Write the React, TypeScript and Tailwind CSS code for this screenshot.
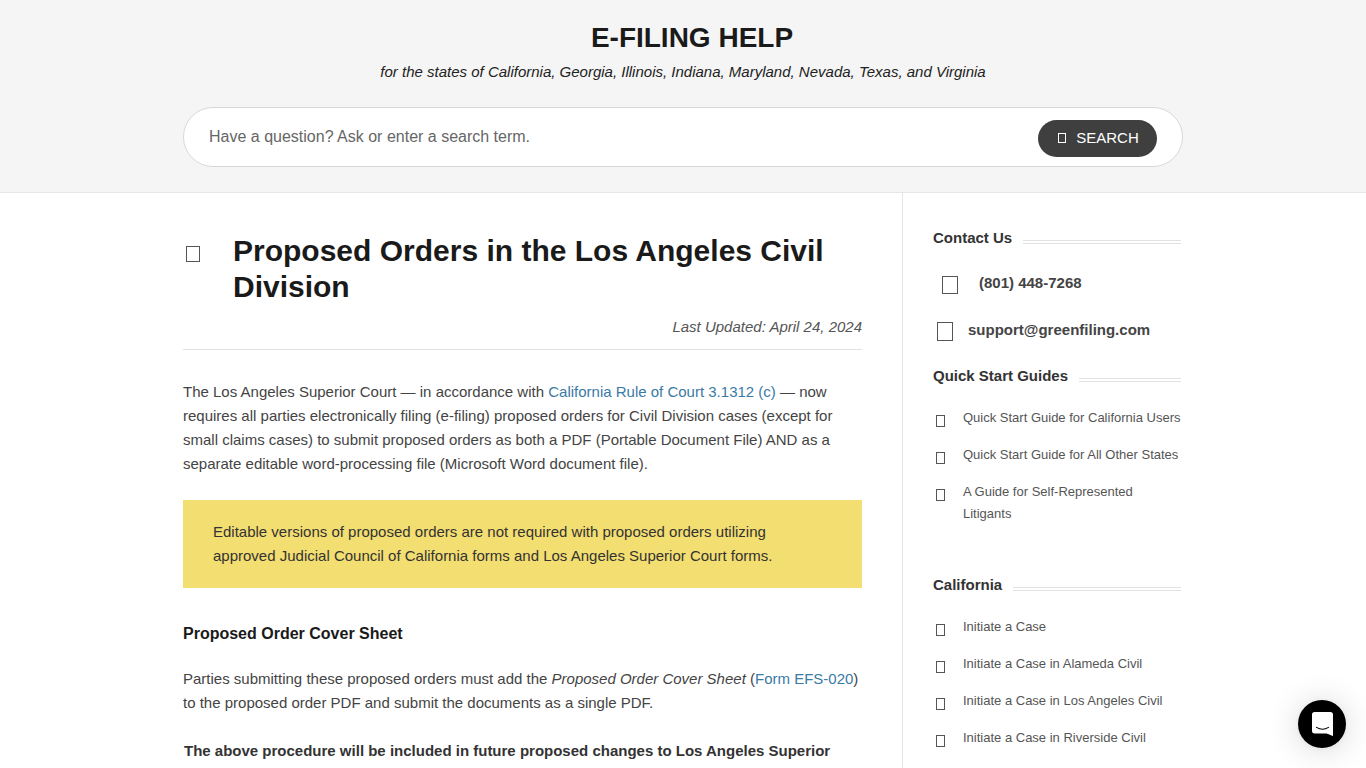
import type { ReactNode } from 'react'

const QUICK_START = [
  'Quick Start Guide for California Users',
  'Quick Start Guide for All Other States',
  'A Guide for Self-Represented Litigants',
]

const CALIFORNIA = [
  'Initiate a Case',
  'Initiate a Case in Alameda Civil',
  'Initiate a Case in Los Angeles Civil',
  'Initiate a Case in Riverside Civil',
]

function Tofu({ className }: { className: string }) {
  return <span className={`block shrink-0 border border-[#555] ${className}`} />
}

function WidgetTitle({ children }: { children: ReactNode }) {
  return (
    <div className="flex items-center gap-[11px]">
      <h3 className="text-[15px] leading-[20px] font-bold text-[#333]">{children}</h3>
      <div className="mt-[7px] h-[4px] flex-1 border-y border-[#e2e2e2]" />
    </div>
  )
}

function LinkList({ items }: { items: string[] }) {
  return (
    <ul className="flex flex-col gap-[15px]">
      {items.map((item) => (
        <li key={item} className="flex items-start text-[13px] leading-[22px] text-[#555]">
          <Tofu className="mt-[8px] ml-[3px] h-[12px] w-[9px]" />
          <span className="ml-[18px]">{item}</span>
        </li>
      ))}
    </ul>
  )
}

export default function App() {
  return (
    <div className="h-[768px] overflow-hidden bg-white font-['Liberation_Sans',Arial,sans-serif] text-[#444]">
      <header className="h-[193px] border-b border-[#e6e6e6] bg-[#f5f5f5] pt-[20px]">
        <h1 className="pl-[18px] text-center text-[28px] leading-[36px] font-bold text-[#1a1a1a]">E-FILING HELP</h1>
        <p className="mt-[5px] text-center text-[15px] leading-[22px] text-[#222] italic">
          for the states of California, Georgia, Illinois, Indiana, Maryland, Nevada, Texas, and Virginia
        </p>
        <div className="mx-auto mt-[24px] flex h-[60px] w-[1000px] items-center justify-between rounded-[30px] border border-[#d8d8d8] bg-white pr-[25px] pl-[25px]">
          <span className="text-[16px] text-[#666]">Have a question? Ask or enter a search term.</span>
          <button className="mt-[2px] flex h-[37px] w-[119px] items-center justify-center gap-[10px] rounded-[19px] bg-[#3f3f3f] pl-[2px] text-[15px] text-white">
            <Tofu className="h-[10px] w-[8px] border-white" />
            SEARCH
          </button>
        </div>
      </header>

      <div className="mx-auto flex h-[575px] w-[1000px]">
        <main className="w-[720px] border-r border-[#e6e6e6] pt-[40px] pr-[40px]">
          <div className="flex items-start">
            <Tofu className="mt-[13px] ml-[3px] h-[16px] w-[14px]" />
            <h1 className="ml-[33px] text-[30px] leading-[36px] font-bold text-[#1a1a1a]">
              Proposed Orders in the Los Angeles Civil Division
            </h1>
          </div>
          <p className="mt-[11px] text-right text-[15px] leading-[22px] text-[#555] italic">Last Updated: April 24, 2024</p>
          <hr className="mt-[11px] border-[#e2e2e2]" />

          <p className="mt-[30px] text-[15px] leading-[24px]">
            The Los Angeles Superior Court — in accordance with{' '}
            <a className="text-[#3a7aa5]">California Rule of Court 3.1312 (c)</a> — now requires all parties
            electronically filing (e-filing) proposed orders for Civil Division cases (except for small claims
            cases) to submit proposed orders as both a PDF (Portable Document File) AND as a separate editable
            word-processing file (Microsoft Word document file).
          </p>

          <div className="mt-[24px] h-[88px] bg-[#f3de71] px-[30px] py-[20px] text-[15px] leading-[24px] text-[#333]">
            Editable versions of proposed orders are not required with proposed orders utilizing
            <br />
            approved Judicial Council of California forms and Los Angeles Superior Court forms.
          </div>

          <h2 className="mt-[35px] text-[16px] leading-[22px] font-bold text-[#1a1a1a]">Proposed Order Cover Sheet</h2>

          <p className="mt-[22px] text-[15px] leading-[24px]">
            Parties submitting these proposed orders must add the <em>Proposed Order Cover Sheet</em> (
            <a className="text-[#3a7aa5]">Form EFS-020</a>) to the proposed order PDF and submit the documents as a
            single PDF.
          </p>

          <p className="mt-[24px] pl-[1px] text-[15px] leading-[24px] font-bold text-[#333]">
            The above procedure will be included in future proposed changes to Los Angeles Superior
          </p>
        </main>

        <aside className="w-[280px] pt-[35px] pr-[2px] pl-[30px]">
          <WidgetTitle>Contact Us</WidgetTitle>
          <div className="mt-[23px] flex items-center pl-[9px] text-[15px] leading-[24px] font-bold text-[#444]">
            <Tofu className="mt-[4px] h-[18px] w-[16px]" />
            <span className="ml-[21px]">(801) 448-7268</span>
          </div>
          <div className="mt-[23px] flex items-center pl-[4px] text-[15px] leading-[24px] font-bold text-[#444]">
            <Tofu className="mt-[2px] h-[19px] w-[16px]" />
            <span className="ml-[15px]">support@greenfiling.com</span>
          </div>

          <div className="mt-[24px]">
            <WidgetTitle>Quick Start Guides</WidgetTitle>
          </div>
          <div className="mt-[21px]">
            <LinkList items={QUICK_START} />
          </div>

          <div className="mt-[50px]">
            <WidgetTitle>California</WidgetTitle>
          </div>
          <div className="mt-[21px]">
            <LinkList items={CALIFORNIA} />
          </div>
        </aside>
      </div>

      <button className="fixed right-[20px] bottom-[20px] flex h-[48px] w-[48px] items-center justify-center rounded-full bg-black shadow-[0_1px_6px_rgba(0,0,0,0.06),0_2px_32px_rgba(0,0,0,0.16)]">
        <svg viewBox="0 0 28 32" className="h-[24px] w-[21px]" fill="white">
          <path d="M28 32s-4.7-1.9-8.5-3.4H3.5A3.5 3.5 0 0 1 0 25.100V3.500A3.500 3.500 0 0 1 3.500 0h21A3.500 3.500 0 0 1 28 3.500z" />
          <path d="M6 20.500c5 3.200 11 3.200 16 0" fill="none" stroke="black" strokeWidth="1.500" strokeLinecap="round" />
        </svg>
      </button>
    </div>
  )
}
